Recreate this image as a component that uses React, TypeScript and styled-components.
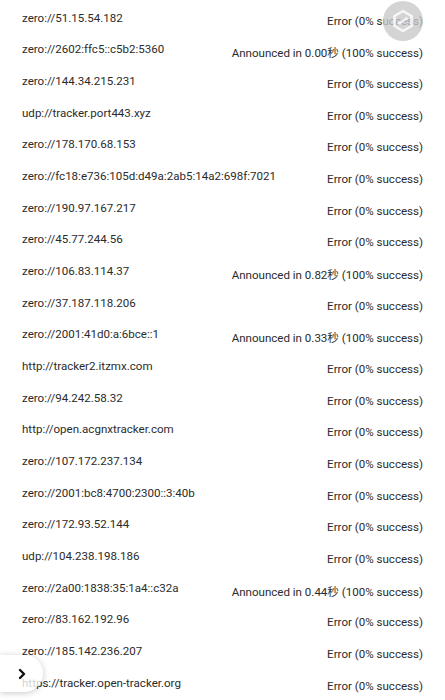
import React from "react";
import styled, { createGlobalStyle } from "styled-components";

const Global = createGlobalStyle`
  html, body { margin: 0; padding: 0; background: #ffffff; }
  body { font-family: Roboto, "Noto Sans", "Noto Sans CJK SC", sans-serif; }
`;

const Page = styled.div`
  position: relative;
  width: 445px;
  height: 700px;
  overflow: hidden;
  background: #fff;
`;

const List = styled.div`
  display: flex;
  flex-direction: column;
  padding: 2px 22px 0 22px;
`;

const Row = styled.div`
  display: flex;
  align-items: center;
  justify-content: space-between;
  height: 31.67px;
  font-size: 11.55px;
  color: #2b2b2b;
  white-space: nowrap;
`;

const Host = styled.span`
  letter-spacing: 0;
`;

const Status = styled.span`
  margin-top: 6px;
  text-align: right;
`;

const FloatBadge = styled.div`
  position: absolute;
  left: 383px;
  top: 1px;
  width: 40px;
  height: 40px;
  border-radius: 50%;
  background: rgba(200, 200, 200, 0.78);
  display: flex;
  align-items: center;
  justify-content: center;
`;

const SideTab = styled.div`
  position: absolute;
  left: 0;
  top: 655px;
  width: 43px;
  height: 37px;
  border-radius: 0 19px 19px 0;
  background: rgba(255, 255, 255, 0.78);
  box-shadow: 0 1px 6px rgba(0, 0, 0, 0.22);
  display: flex;
  align-items: center;
  justify-content: center;
`;

const rows: [string, string][] = [
  ["zero://51.15.54.182", "Error (0% success)"],
  ["zero://2602:ffc5::c5b2:5360", "Announced in 0.00秒 (100% success)"],
  ["zero://144.34.215.231", "Error (0% success)"],
  ["udp://tracker.port443.xyz", "Error (0% success)"],
  ["zero://178.170.68.153", "Error (0% success)"],
  ["zero://fc18:e736:105d:d49a:2ab5:14a2:698f:7021", "Error (0% success)"],
  ["zero://190.97.167.217", "Error (0% success)"],
  ["zero://45.77.244.56", "Error (0% success)"],
  ["zero://106.83.114.37", "Announced in 0.82秒 (100% success)"],
  ["zero://37.187.118.206", "Error (0% success)"],
  ["zero://2001:41d0:a:6bce::1", "Announced in 0.33秒 (100% success)"],
  ["http://tracker2.itzmx.com", "Error (0% success)"],
  ["zero://94.242.58.32", "Error (0% success)"],
  ["http://open.acgnxtracker.com", "Error (0% success)"],
  ["zero://107.172.237.134", "Error (0% success)"],
  ["zero://2001:bc8:4700:2300::3:40b", "Error (0% success)"],
  ["zero://172.93.52.144", "Error (0% success)"],
  ["udp://104.238.198.186", "Error (0% success)"],
  ["zero://2a00:1838:35:1a4::c32a", "Announced in 0.44秒 (100% success)"],
  ["zero://83.162.192.96", "Error (0% success)"],
  ["zero://185.142.236.207", "Error (0% success)"],
  ["https://tracker.open-tracker.org", "Error (0% success)"],
];

export default function App() {
  return (
    <Page>
      <Global />
      <List>
        {rows.map(([h, s], i) => (
          <Row key={i}>
            <Host>{h}</Host>
            <Status>{s}</Status>
          </Row>
        ))}
      </List>
      <FloatBadge>
        <svg width="22" height="24" viewBox="0 0 22 24" fill="none">
          <path
            d="M11 2 L19.5 7 V17 L11 22 L2.5 17 V7 Z"
            stroke="rgba(255,255,255,0.8)"
            strokeWidth="2.6"
            strokeLinejoin="round"
          />
          <path
            d="M7 14.5 L14.5 9.5"
            stroke="rgba(255,255,255,0.8)"
            strokeWidth="2.6"
            strokeLinecap="round"
          />
        </svg>
      </FloatBadge>
      <SideTab>
        <svg width="10" height="12" viewBox="0 0 10 12">
          <path
            d="M3 2 L7 6 L3 10"
            stroke="#111"
            strokeWidth="2.4"
            fill="none"
            strokeLinecap="round"
            strokeLinejoin="round"
          />
        </svg>
      </SideTab>
    </Page>
  );
}
